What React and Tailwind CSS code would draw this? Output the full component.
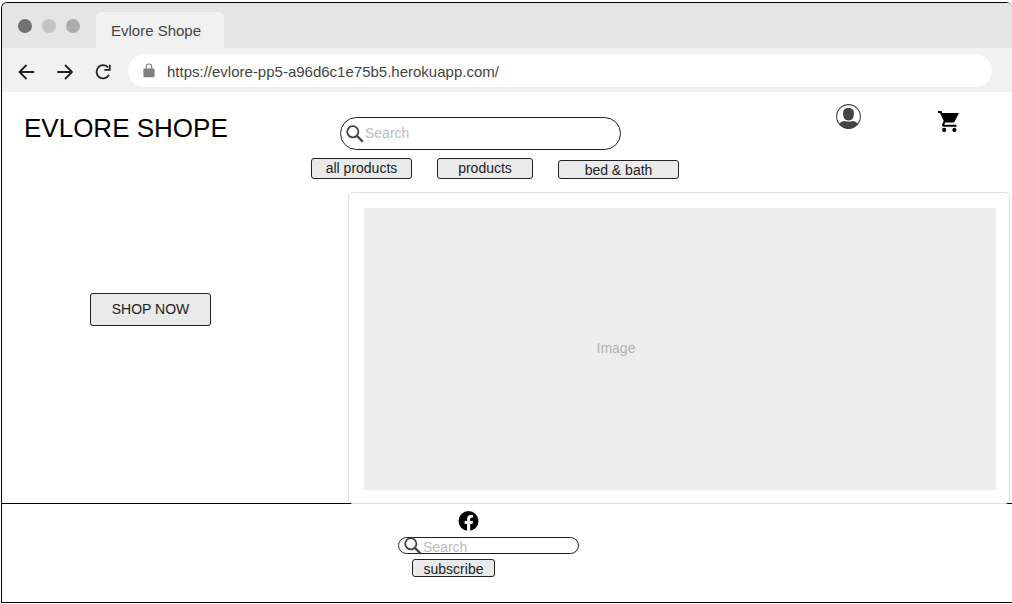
import React from "react";

function BackIcon() {
  return (
    <svg className="h-5 w-5" viewBox="0 0 20 20" fill="none" stroke="#222" strokeWidth="1.8" strokeLinecap="round" strokeLinejoin="round">
      <path d="M16.500 10H3M9 3.500L2.500 10L9 16.500" />
    </svg>
  );
}

function ForwardIcon() {
  return (
    <svg className="h-5 w-5" viewBox="0 0 20 20" fill="none" stroke="#222" strokeWidth="1.8" strokeLinecap="round" strokeLinejoin="round">
      <path d="M3 10H16.500M10.500 3.500L17 10L10.500 16.500" />
    </svg>
  );
}

function ReloadIcon() {
  return (
    <svg className="h-5 w-5" viewBox="0 0 20 20" fill="none" stroke="#222" strokeWidth="1.8">
      <path d="M15.200 5.500A6.600 6.600 0 1 0 16 12.800" />
      <path d="M16.800 2.800V7.800H11.400" />
    </svg>
  );
}

function LockIcon() {
  return (
    <svg className="h-[15px] w-3 shrink-0" viewBox="0 0 12 15">
      <path d="M3.200 6V3.800a2.800 2.800 0 0 1 5.600 0V6" fill="none" stroke="#808080" strokeWidth="1.100" />
      <rect x="0.400" y="5.400" width="11.200" height="8.800" rx="1.200" fill="#808080" />
    </svg>
  );
}

function SearchIcon() {
  return (
    <svg className="h-[18px] w-[18px] shrink-0" viewBox="0 0 18 18" fill="none" stroke="#444">
      <circle cx="6.800" cy="6.800" r="5.600" strokeWidth="1.800" />
      <path d="M10.900 10.900L16.800 16.800" strokeWidth="2.300" />
    </svg>
  );
}

function UserIcon() {
  return (
    <svg className="h-[25px] w-[25px]" viewBox="0 0 25 25">
      <circle cx="12.500" cy="12.500" r="11.900" fill="#fff" stroke="#444" strokeWidth="1.100" />
      <path d="M12.500 4.100c3.700 0 5.400 1.700 5.400 5.400 0 4.500-1.900 6.900-5.400 6.900s-5.400-2.400-5.400-6.900c0-3.700 1.700-5.400 5.400-5.400Z" fill="#444" />
      <path d="M2.900 19.800C4.400 17.900 6.600 17.200 8.600 16.900c2 .9 5.800.9 7.800 0 2 .3 4.200 1 5.700 2.900-2.400 3.200-5.400 4.900-9.600 4.900s-7.200-1.700-9.600-4.900Z" fill="#444" />
    </svg>
  );
}

function CartIcon() {
  return (
    <svg className="h-[21px] w-[21px]" viewBox="1 2 20.500 20" preserveAspectRatio="none">
      <path d="M7 18c-1.100 0-1.990.9-1.990 2S5.900 22 7 22s2-.9 2-2-.9-2-2-2zM1 2v2h2l3.600 7.590-1.350 2.450c-.16.28-.25.61-.25.960 0 1.100.9 2 2 2h12v-2H7.420c-.14 0-.25-.11-.25-.25l.03-.12.9-1.630h7.450c.75 0 1.410-.41 1.750-1.030l4.200-8H5.210l-.94-2H1zm16 16c-1.100 0-1.990.9-1.990 2s.89 2 1.990 2 2-.9 2-2-.9-2-2-2z" />
    </svg>
  );
}

function FacebookIcon() {
  return (
    <svg className="h-5 w-[21px]" viewBox="0 0 21 20">
      <circle cx="10.500" cy="10" r="10" fill="#000" />
      <path d="M9.100 20V12.900H6.600V10h2.500V7.800c0-2.500 1.500-3.900 3.800-3.900 1 0 2.200.2 2.200.2v2.500h-1.300c-1.200 0-1.600.8-1.600 1.600V10h2.800l-.5 2.900h-2.300V20Z" fill="#fff" />
    </svg>
  );
}

const button = "flex justify-center rounded-[3px] border border-[#222] bg-[#eaeaea] text-sm text-[#222]";
const field = "min-w-0 flex-1 bg-transparent text-sm leading-4 text-[#222] outline-none placeholder:text-[#bcbcbc]";

export default function App() {
  return (
    <div className="min-h-screen bg-white pt-[2px] pl-px font-['Liberation_Sans',Arial,sans-serif]">
      <div className="rounded-t-md border-t border-b border-l border-black">
        <div className="flex h-[45px] items-end rounded-t-[5px] bg-[#e5e5e5] pl-4">
          <div className="flex gap-[10px] self-center">
            <span className="h-[14px] w-[14px] rounded-full bg-[#737373]" />
            <span className="h-[14px] w-[14px] rounded-full bg-[#c4c4c4]" />
            <span className="h-[14px] w-[14px] rounded-full bg-[#ababab]" />
          </div>
          <div className="ml-4 flex h-9 items-center rounded-t-[5px] bg-[#f1f1f1] pt-[2px] pr-[23px] pl-[15px] text-[15px] leading-5 text-[#444]">
            Evlore Shope
          </div>
        </div>

        <div className="flex h-11 items-center bg-[#f1f1f1] pr-5 pl-[15px]">
          <div className="flex gap-[18px] pt-[3px]">
            <button type="button" aria-label="Back"><BackIcon /></button>
            <button type="button" aria-label="Forward"><ForwardIcon /></button>
            <button type="button" aria-label="Reload"><ReloadIcon /></button>
          </div>
          <div className="ml-[15px] flex h-[33px] flex-1 items-center gap-3 rounded-full bg-white pl-[15px]">
            <LockIcon />
            <input
              aria-label="Address"
              defaultValue="https://evlore-pp5-a96d6c1e75b5.herokuapp.com/"
              className="min-w-0 flex-1 bg-transparent pt-[3px] text-[15px] leading-5 text-[#444] outline-none"
            />
          </div>
        </div>

        <header className="grid grid-cols-[309px_368px_1fr] items-start pb-[13px]">
          <h1 className="pt-5 pl-[22px] text-[26px] leading-8 text-black">EVLORE SHOPE</h1>
          <div className="pt-[25px]">
            <label className="ml-[29px] flex h-[33px] w-[281px] items-center gap-px rounded-full border border-[#222] pr-3 pl-[5px]">
              <SearchIcon />
              <input type="search" aria-label="Search" placeholder="Search" className={`${field} pb-[2px]`} />
            </label>
            <nav className="mt-2 flex items-end gap-[25px]">
              <button type="button" className={`${button} h-[21px] w-[101px] leading-[18px]`}>all products</button>
              <button type="button" className={`${button} h-[21px] w-24 leading-[18px]`}>products</button>
              <button type="button" className={`${button} h-[19px] flex-1 leading-[18px]`}>bed &amp; bath</button>
            </nav>
          </div>
          <div className="flex items-start justify-end gap-[77px] pt-3 pr-[53px]">
            <button type="button" aria-label="Account"><UserIcon /></button>
            <button type="button" aria-label="Cart" className="pt-[7px]"><CartIcon /></button>
          </div>
        </header>

        <main className="grid grid-cols-[346px_1fr] border-b border-black pr-[2px]">
          <div className="pt-[101px] pl-[88px]">
            <button type="button" className={`${button} h-[33px] w-[121px] leading-[30px]`}>SHOP NOW</button>
          </div>
          <div className="-mb-px rounded-[5px] border border-[#dedede] bg-white pt-[15px] pr-[13px] pb-[13px] pl-[15px]">
            <div role="img" aria-label="Image" className="flex h-[282px] items-center justify-center bg-[#ededed] pr-32 pb-[2px] text-sm text-[#b3b3b3]">
              Image
            </div>
          </div>
        </main>

        <footer className="flex h-[98px] flex-col items-start pt-[7px] pl-[396px]">
          <a href="#facebook" aria-label="Facebook" className="ml-[60px]"><FacebookIcon /></a>
          <label className="mt-[6px] flex h-[17px] w-[181px] items-center gap-px rounded-full border border-[#222] pt-px pr-3 pl-[5px]">
            <SearchIcon />
            <input type="search" aria-label="Newsletter search" placeholder="Search" className={`${field} pt-[2px]`} />
          </label>
          <button type="button" className={`${button} mt-[5px] ml-[14px] h-[18px] w-[83px] leading-[18px]`}>subscribe</button>
        </footer>
      </div>
    </div>
  );
}
